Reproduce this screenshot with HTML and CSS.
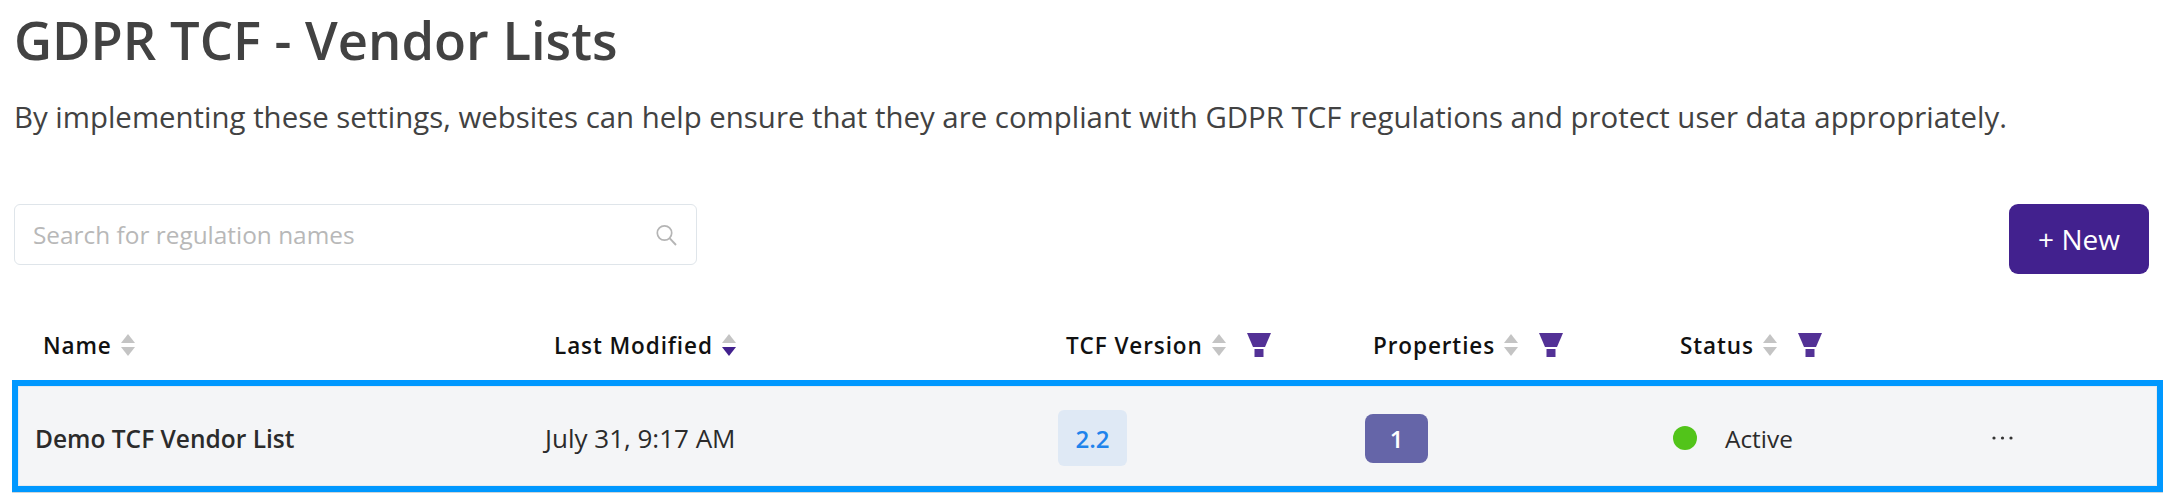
FILE: index.html
```
<!DOCTYPE html>
<html lang="en">
<head>
<meta charset="utf-8">
<title>GDPR TCF - Vendor Lists</title>
<link rel="stylesheet" href="styles.css">
</head>
<body>
<main class="page">
  <h1 class="title">GDPR TCF - Vendor Lists</h1>
  <p class="desc">By implementing these settings, websites can help ensure that they are compliant with GDPR TCF regulations and protect user data appropriately.</p>
  <div class="toolbar">
    <label class="search">
      <input class="search-input" type="text" placeholder="Search for regulation names">
      <svg class="search-icon" viewBox="0 0 24 24" width="24" height="24"><circle cx="10.5" cy="10" r="7.2" fill="none" stroke="#b5b5b5" stroke-width="1.7"/><path d="M15.8 15.4 22 22" fill="none" stroke="#b5b5b5" stroke-width="1.9"/></svg>
    </label>
    <button class="new-btn">+ New</button>
  </div>
  <div class="thead">
    <div class="th"><span>Name</span><svg class="sort" viewBox="0 0 14 22" width="14" height="22"><path d="M7 0 14 9H0Z" fill="#c4c4c4"/><path d="M0 13H14L7 22Z" fill="#c4c4c4"/></svg></div>
    <div class="th"><span>Last Modified</span><svg class="sort" viewBox="0 0 14 22" width="14" height="22"><path d="M7 0 14 9H0Z" fill="#c4c4c4"/><path d="M0 13H14L7 22Z" fill="#42218e"/></svg></div>
    <div class="th"><span>TCF Version</span><svg class="sort" viewBox="0 0 14 22" width="14" height="22"><path d="M7 0 14 9H0Z" fill="#c4c4c4"/><path d="M0 13H14L7 22Z" fill="#c4c4c4"/></svg><svg class="funnel" viewBox="0 0 24 24" width="24" height="24"><path d="M0 0H24L18 14H6Z" fill="#533196"/><path d="M7.5 16H16.5V24H7.5Z" fill="#533196"/></svg></div>
    <div class="th"><span>Properties</span><svg class="sort" viewBox="0 0 14 22" width="14" height="22"><path d="M7 0 14 9H0Z" fill="#c4c4c4"/><path d="M0 13H14L7 22Z" fill="#c4c4c4"/></svg><svg class="funnel" viewBox="0 0 24 24" width="24" height="24"><path d="M0 0H24L18 14H6Z" fill="#533196"/><path d="M7.5 16H16.5V24H7.5Z" fill="#533196"/></svg></div>
    <div class="th"><span>Status</span><svg class="sort" viewBox="0 0 14 22" width="14" height="22"><path d="M7 0 14 9H0Z" fill="#c4c4c4"/><path d="M0 13H14L7 22Z" fill="#c4c4c4"/></svg><svg class="funnel" viewBox="0 0 24 24" width="24" height="24"><path d="M0 0H24L18 14H6Z" fill="#533196"/><path d="M7.5 16H16.5V24H7.5Z" fill="#533196"/></svg></div>
    <div class="th"></div>
  </div>
  <div class="row">
    <div class="name">Demo TCF Vendor List</div>
    <div class="cell date">July 31, 9:17 AM</div>
    <div class="cell"><span class="version">2.2</span></div>
    <div class="cell"><span class="count">1</span></div>
    <div class="cell status"><span class="dot"></span><span>Active</span></div>
    <div class="cell more"><svg viewBox="0 0 21 4" width="21" height="4"><circle cx="2" cy="2" r="1.6" fill="#333"/><circle cx="10.5" cy="2" r="1.6" fill="#333"/><circle cx="19" cy="2" r="1.6" fill="#333"/></svg></div>
  </div>
</main>
</body>
</html>
```
FILE: styles.css
```
* { box-sizing: border-box; }
html, body { margin: 0; background: #fff; }
body { font-family: "Open Sans", "Liberation Sans", sans-serif; color: #2b2b2b; overflow: hidden; }
.page { width: 2175px; height: 502px; padding: 0 12px 0 14px; }
.title { margin: 0; padding-top: 4px; font-size: 52.5px; line-height: 72px; font-weight: 600; color: #424242; }
.desc { margin: 0; padding-top: 20px; font-size: 29.4px; line-height: 42px; color: #424242; white-space: nowrap; }
.toolbar { display: flex; justify-content: space-between; align-items: flex-start; margin-top: 66px; padding-right: 14px; }
.search { display: flex; align-items: center; width: 683px; height: 61px; padding: 0 18px; border: 1px solid #dfe5ea; border-radius: 6px; }
.search-input { flex: 1; min-width: 0; border: 0; outline: 0; padding: 0; background: transparent; font: 24.4px "Open Sans", sans-serif; color: #333; }
.search-input::placeholder { color: #b8b8b8; opacity: 1; }
.new-btn { width: 140px; height: 70px; border: 0; border-radius: 9px; background: #42218e; color: #fff; font: 28px "Open Sans", sans-serif; }
.thead { display: grid; grid-template-columns: 511px 512px 307px 307px 1fr 150px; height: 106px; padding: 36px 0 0 29px; align-items: center; }
.th { display: flex; align-items: center; font-size: 22.5px; font-weight: 600; color: #111; letter-spacing: 0.9px; }
.sort { margin-left: 9px; }
.funnel { margin-left: 21px; }
.row { display: grid; grid-template-columns: 510px 513px 307px 308px 319px 1fr; align-items: center; height: 112px; margin-left: -2px; padding: 4px 0 0 17px; border: 6px solid #0098ff; background: #f4f5f7; box-shadow: 0 1px 0 #cfd6da, inset 0 0 0 1px #e6eaee; }
.name { font-size: 24.5px; font-weight: 600; color: #2b2b2b; }
.cell { display: flex; align-items: center; font-size: 24.4px; color: #2b2b2b; }
.date { font-size: 26px; }
.version { display: flex; align-items: center; justify-content: center; width: 69px; height: 56px; border-radius: 6px; background: #dfe9f5; color: #1f84ec; font-size: 24px; font-weight: 600; }
.count { display: flex; align-items: center; justify-content: center; width: 63px; height: 49px; border-radius: 8px; background: #6565a8; color: #fff; font-size: 24px; font-weight: 600; }
.dot { width: 24px; height: 24px; border-radius: 50%; background: #52c41a; margin-right: 28px; }
.more svg { display: block; }
```
